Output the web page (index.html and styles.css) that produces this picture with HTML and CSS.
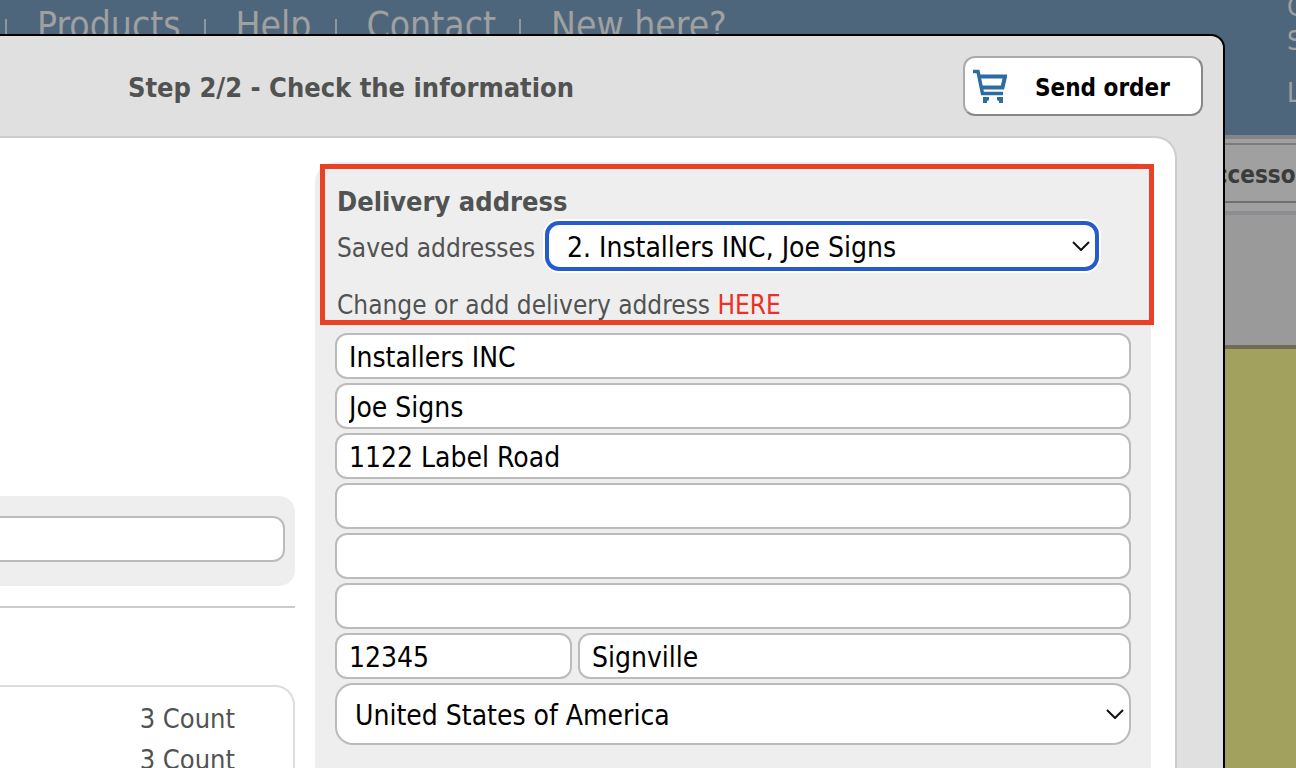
FILE: index.html
```html
<!DOCTYPE html>
<html lang="en">
<head>
<meta charset="utf-8">
<title>Check the information</title>
<link rel="stylesheet" href="styles.css">
</head>
<body>
<div class="site">
  <header class="site-header">
    <nav class="site-nav">
      <a href="#">Products</a>
      <a href="#">Help</a>
      <a href="#">Contact</a>
      <a href="#">New here?</a>
    </nav>
    <div class="account">
      <span>C</span>
      <span>S</span>
      <a class="logout" href="#">L</a>
    </div>
  </header>
  <div class="tabs"><a class="tab" href="#">Accesso</a></div>
  <div class="toolbar"></div>
  <div class="workspace"></div>
</div>

<section class="dialog" role="dialog" aria-labelledby="step-title">
  <div class="dialog-header">
    <h1 id="step-title">Step 2/2 - Check the information</h1>
    <button class="send" type="button">
      <svg class="cart" viewBox="0 0 34 34" aria-hidden="true">
        <path d="M0 2.500H5L9.500 24.500H30" fill="none" stroke="#2d6ba3" stroke-width="3.500"/>
        <path d="M6 7.500H32L29.500 18.500H8" fill="none" stroke="#2d6ba3" stroke-width="4"/>
        <path d="M10 28h6v3l-2 1v2h-4zM24 28h6v6h-4v-2l-2-1z" fill="#2d6ba3"/>
      </svg>
      <span>Send order</span>
    </button>
  </div>

  <form class="panel">
    <div class="summary">
      <div class="note"><input class="field" type="text" aria-label="Reference"></div>
      <hr>
      <div class="counts">
        <div>3 Count</div>
        <div>3 Count</div>
      </div>
    </div>

    <div class="delivery">
      <h2>Delivery address</h2>
      <div class="saved">
        <label for="saved">Saved addresses</label>
        <div class="select-wrap">
          <select class="field saved-select" id="saved"><option>2. Installers INC, Joe Signs</option></select>
          <svg class="chevron" viewBox="0 0 18 10" aria-hidden="true"><path d="M1 1l8 8 8-8"/></svg>
        </div>
      </div>
      <p class="change">Change or add delivery address <a href="#">HERE</a></p>
      <div class="fields">
        <input class="field" type="text" aria-label="Company" value="Installers INC">
        <input class="field" type="text" aria-label="Name" value="Joe Signs">
        <input class="field" type="text" aria-label="Street" value="1122 Label Road">
        <input class="field" type="text" aria-label="Address line 2">
        <input class="field" type="text" aria-label="Address line 3">
        <input class="field" type="text" aria-label="Address line 4">
        <div class="city-row">
          <input class="field" type="text" aria-label="Postal code" value="12345">
          <input class="field" type="text" aria-label="City" value="Signville">
        </div>
        <div class="select-wrap">
          <select class="field country" aria-label="Country"><option>United States of America</option></select>
          <svg class="chevron" viewBox="0 0 18 10" aria-hidden="true"><path d="M1 1l8 8 8-8"/></svg>
        </div>
      </div>
      <div class="highlight"></div>
    </div>
  </form>
</section>
</body>
</html>
```
FILE: styles.css
```css
* { box-sizing: border-box; }

body {
  margin: 0;
  height: 100vh;
  overflow: hidden;
  position: relative;
  font-family: Tahoma, "DejaVu Sans Condensed", "DejaVu Sans", sans-serif;
  font-size: 27px;
  line-height: 34px;
  color: #515352;
  background: #a2a15d;
}

h1, h2, p { margin: 0; font-size: 27px; }
input, select, button { font: inherit; }

/* Dimmed page behind the dialog */
.site { height: 100vh; display: flex; flex-direction: column; }
.site-header {
  height: 135px;
  display: flex;
  align-items: flex-start;
  justify-content: space-between;
  background: #4e667c;
  color: #a0a0a0;
}
.site-nav { display: flex; padding-top: 5px; font-size: 37px; line-height: 42px; }
.site-nav a {
  display: flex;
  align-items: center;
  color: inherit;
  text-decoration: none;
  padding: 0 18px 0 5px;
}
.site-nav a::before {
  content: "";
  width: 2px;
  height: 18px;
  margin: 4px 30px 0 0;
  background: #8f979e;
}
.account {
  flex: 0 0 9px;
  display: flex;
  flex-direction: column;
  overflow: hidden;
  white-space: nowrap;
  margin-top: -10px;
}
.account .logout { margin-top: 18px; color: inherit; text-decoration: none; }
.tabs {
  height: 80px;
  padding: 4px 0 8px;
  background: #a0a0a0;
  border-top: 4px solid #858585;
  border-bottom: 4px solid #8e8e92;
}
.tab {
  display: block;
  height: 60px;
  padding-left: 1198px;
  border-top: 2px solid #7b7b7b;
  border-bottom: 2px solid #707070;
  line-height: 60px;
  font-size: 24px;
  font-weight: bold;
  color: #3b3b3b;
  text-decoration: none;
}
.toolbar {
  height: 134px;
  background: #9a9a9a;
  border-bottom: 4px solid #6d6d55;
}
.workspace { flex: 1; background: #a2a15d; }

/* Order dialog */
.dialog {
  position: absolute;
  top: 34px;
  left: -20px;
  right: 71px;
  min-height: 100vh;
  display: flex;
  flex-direction: column;
  background: #e0e0e0;
  border: 2px solid #000;
  border-radius: 14px;
}
.dialog-header {
  height: 100px;
  display: flex;
  align-items: center;
  justify-content: space-between;
  padding: 0 20px 0 146px;
}
.dialog-header h1 { padding-top: 3px; }
.send {
  width: 240px;
  height: 60px;
  display: flex;
  align-items: center;
  gap: 28px;
  padding: 0 8px;
  border: 2px solid;
  border-color: #aaa #888 #888 #aaa;
  border-radius: 12px;
  background: #fff;
  color: #000;
  font-size: 24px;
  font-weight: bold;
}
.send span { padding-top: 3px; }
.cart { width: 34px; height: 34px; }

.panel {
  flex: 1;
  display: flex;
  gap: 20px;
  margin-right: 46px;
  padding: 24px 24px 0 0;
  background: #fff;
  border-top: 2px solid #ccc;
  border-right: 2px solid #ccc;
  border-top-right-radius: 22px;
}
.summary { flex: 1; padding-top: 334px; }
.note { padding: 20px 10px 24px 0; border-radius: 0 16px 16px 0; background: #eee; }
.summary hr { margin: 20px 0 77px; border: 0; border-top: 2px solid #ccc; }
.counts {
  height: 160px;
  padding: 11px 58px;
  border: 2px solid #ddd;
  border-radius: 20px;
  text-align: right;
  line-height: 41px;
}

.delivery {
  position: relative;
  flex: 0 0 836px;
  padding: 23px 20px;
  border-radius: 20px;
  background: #eee;
}
.delivery h2, .saved label, .change { padding-left: 2px; }
.saved { display: flex; align-items: center; padding: 4px 34px 4px 0; }
.saved label { flex: 0 0 212px; padding-top: 3px; font-size: 26px; }
.saved .select-wrap { flex: 1; }
.change { margin: 15px 0 11px; font-size: 26px; }
.change a { color: #ec3024; text-decoration: none; }

.fields { display: flex; flex-direction: column; gap: 4px; }
.field {
  display: block;
  width: 100%;
  height: 46px;
  padding: 2px 12px 0;
  border: 2px solid #bbb;
  border-radius: 12px;
  background: #fff;
  color: #000;
  font-size: 28px;
}
.city-row { display: grid; grid-template-columns: 237px 1fr; gap: 6px; }
.select-wrap { position: relative; }
select.field { appearance: none; padding: 3px 18px 0; }
.saved-select {
  border-color: #265bcb;
  box-shadow: 0 0 0 2px #265bcb, 0 0 0 4px #fff;
}
.field.country { height: 62px; border-radius: 18px; }
.chevron {
  position: absolute;
  right: 7px;
  top: 50%;
  width: 18px;
  height: 10px;
  margin-top: -5px;
  fill: none;
  stroke: #111;
  stroke-width: 2;
  pointer-events: none;
}

/* Callout around the saved-address controls */
.highlight {
  position: absolute;
  top: 2px;
  left: 5px;
  right: -3px;
  height: 161px;
  border: 5px solid #ea4025;
  pointer-events: none;
}
```
